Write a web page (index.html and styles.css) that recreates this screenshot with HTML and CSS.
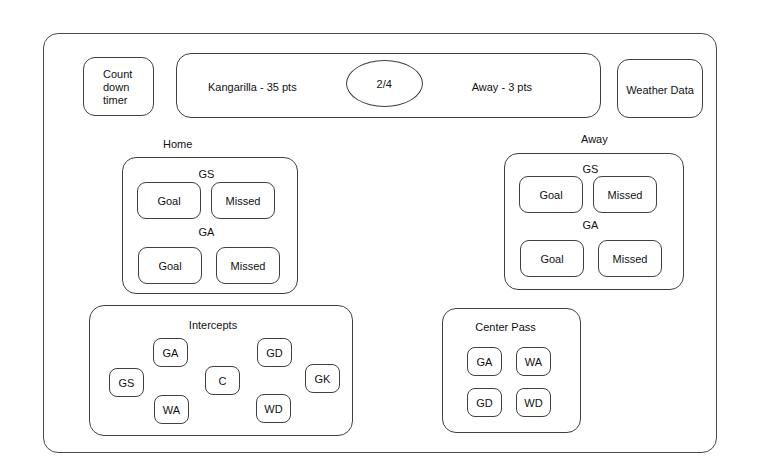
FILE: index.html
```
<!DOCTYPE html>
<html lang="en">
<head>
    <meta charset="UTF-8">
    <meta name="viewport" content="width=device-width, initial-scale=1.0">
    <title>Netball Scorer | Wireframe</title>
    <link rel="stylesheet" href="styles.css">
</head>
<body>
    <div class="board">
        <!-- top bar -->
        <div class="box countdown">Count<br>down<br>timer</div>

        <div class="box scorebar">
            <span class="team">Kangarilla - 35 pts</span>
            <span class="quarter">2/4</span>
            <span class="team">Away - 3 pts</span>
        </div>

        <div class="box weather">Weather Data</div>

        <!-- shooting -->
        <div class="side side-home">
            <div class="side-label">Home</div>
            <div class="box panel">
                <div class="pos pos-first">GS</div>
                <div class="pair pair-first">
                    <button class="box btn">Goal</button>
                    <button class="box btn">Missed</button>
                </div>
                <div class="pos">GA</div>
                <div class="pair pair-second">
                    <button class="box btn">Goal</button>
                    <button class="box btn">Missed</button>
                </div>
            </div>
        </div>

        <div class="side side-away">
            <div class="side-label">Away</div>
            <div class="box panel">
                <div class="pos pos-first">GS</div>
                <div class="pair pair-first">
                    <button class="box btn">Goal</button>
                    <button class="box btn">Missed</button>
                </div>
                <div class="pos">GA</div>
                <div class="pair pair-second">
                    <button class="box btn">Goal</button>
                    <button class="box btn">Missed</button>
                </div>
            </div>
        </div>

        <!-- intercepts, laid out like the court -->
        <div class="box intercepts">
            <div class="panel-title">Intercepts</div>
            <button class="box chip" style="left: 19px; top: 62px;">GS</button>
            <button class="box chip" style="left: 63px; top: 32px;">GA</button>
            <button class="box chip" style="left: 64px; top: 89px;">WA</button>
            <button class="box chip" style="left: 115px; top: 60px;">C</button>
            <button class="box chip" style="left: 167px; top: 32px;">GD</button>
            <button class="box chip" style="left: 166px; top: 88px;">WD</button>
            <button class="box chip" style="left: 215px; top: 58px;">GK</button>
        </div>

        <div class="box centerpass">
            <div class="panel-title">Center Pass</div>
            <div class="cp-grid">
                <button class="box chip">GA</button>
                <button class="box chip">WA</button>
                <button class="box chip">GD</button>
                <button class="box chip">WD</button>
            </div>
        </div>
    </div>
</body>
</html>
```

FILE: styles.css
```
body {
    margin: 0;
    padding: 0;
    background: #fff;
    font-family: "Liberation Sans", Arial, sans-serif;
    font-size: 11px;
    color: #111;
}

.board {
    position: relative;
    margin: 33px 0 0 43px;
    width: 672px;
    height: 418px;
    border: 1px solid #4a4a4a;
    border-radius: 15px;
}

.box {
    box-sizing: border-box;
    border: 1px solid #3f3f3f;
    border-radius: 12px;
    background: #fff;
}

button {
    font-family: inherit;
    font-size: 11px;
    color: #111;
    padding: 0;
    cursor: pointer;
}

/* top row */
.countdown {
    position: absolute;
    left: 39px;
    top: 23px;
    width: 71px;
    height: 59px;
    padding: 10px 0 0 19px;
    line-height: 13px;
}

.scorebar {
    position: absolute;
    left: 132px;
    top: 19px;
    width: 425px;
    height: 65px;
    border-radius: 15px;
    display: flex;
    align-items: center;
    gap: 49px;
    padding-left: 31px;
}

.scorebar .team {
    margin-top: 2px;
}

.quarter {
    display: flex;
    align-items: center;
    justify-content: center;
    width: 77px;
    height: 47px;
    margin-top: -4px;
    border: 1px solid #3f3f3f;
    border-radius: 50%;
    box-sizing: border-box;
}

.weather {
    position: absolute;
    left: 573px;
    top: 25px;
    width: 86px;
    height: 59px;
    display: flex;
    align-items: center;
    justify-content: center;
    padding-top: 2px;
}

/* home / away shooting */
.side {
    position: absolute;
}

.side-home {
    left: 78px;
    top: 103px;
}

.side-away {
    left: 460px;
    top: 98px;
}

.side-label {
    line-height: 14px;
    height: 14px;
    margin-bottom: 6px;
}

.side-home .side-label {
    margin-left: 41px;
}

.side-away .side-label {
    margin-left: 77px;
    margin-bottom: 7px;
}

.panel {
    width: 176px;
    height: 137px;
    border-radius: 14px;
    padding-top: 2px;
}

.side-away .panel {
    width: 180px;
    padding-top: 4px;
}

.pos {
    text-align: center;
    line-height: 14px;
    padding-right: 7px;
    margin-top: 6px;
}

.pos-first {
    margin-top: 7px;
}

.side-away .pos-first {
    margin-top: 4px;
}

.pair {
    display: flex;
}

.pair-first {
    margin: 1px 0 0 14px;
    gap: 10px;
}

.pair-second {
    margin: 8px 0 0 15px;
    gap: 14px;
}

.side-away .pair-first {
    margin-top: 0;
}

.side-away .pair-second {
    margin-top: 8px;
}

.side-away .pos {
    margin-top: 5px;
}

.side-away .pos-first {
    margin-top: 4px;
}

.btn {
    width: 64px;
    height: 37px;
    border-radius: 9px;
}

/* intercepts */
.intercepts {
    position: absolute;
    left: 45px;
    top: 271px;
    width: 264px;
    height: 131px;
    border-radius: 15px;
}

.panel-title {
    text-align: center;
    line-height: 14px;
    padding-top: 12px;
}

.intercepts .panel-title {
    padding-right: 16px;
}

.chip {
    width: 35px;
    height: 29px;
    border-radius: 8px;
}

.intercepts .chip {
    position: absolute;
}

/* center pass */
.centerpass {
    position: absolute;
    left: 398px;
    top: 274px;
    width: 139px;
    height: 125px;
    border-radius: 14px;
}

.centerpass .panel-title {
    padding-right: 12px;
    padding-top: 11px;
}

.cp-grid {
    display: grid;
    grid-template-columns: 35px 35px;
    column-gap: 14px;
    row-gap: 12px;
    margin: 13px 0 0 24px;
}
```
